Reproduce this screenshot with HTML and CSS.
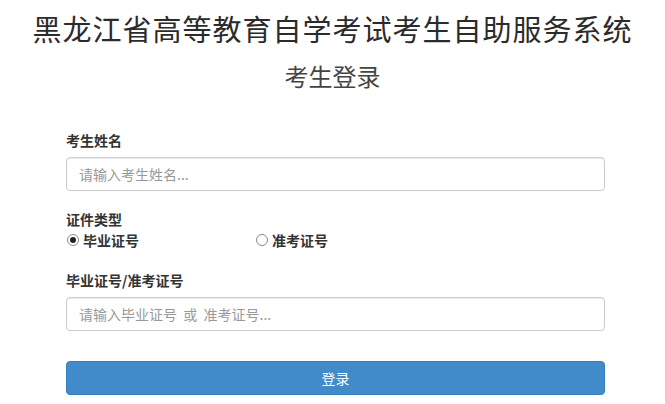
FILE: index.html
```html
<!DOCTYPE html>
<html lang="zh-CN">
<head>
    <meta charset="UTF-8">
    <meta name="viewport" content="width=device-width, initial-scale=1.0">
    <title>考生登录</title>
    <link rel="stylesheet" href="styles.css">
</head>
<body>

    <h1 class="titre">黑龙江省高等教育自学考试考生自助服务系统</h1>
    <h2 class="sous-titre">考生登录</h2>

    <form class="login-form">
        <div class="form-group">
            <label class="form-label" for="nomInput">考生姓名</label>
            <input type="text" id="nomInput" class="form-input" placeholder="请输入考生姓名...">
        </div>

        <div class="form-group group-radio">
            <span class="form-label">证件类型</span>
            <div class="radio-row">
                <label class="radio-option">
                    <input type="radio" name="typeCert" value="biye" checked>
                    毕业证号
                </label>
                <label class="radio-option">
                    <input type="radio" name="typeCert" value="zhunkao">
                    准考证号
                </label>
            </div>
        </div>

        <div class="form-group group-last">
            <label class="form-label" for="numInput">毕业证号/准考证号</label>
            <input type="text" id="numInput" class="form-input" placeholder="请输入毕业证号&#160;&#160;或&#160;&#160;准考证号...">
        </div>

        <button type="button" class="btn-login">登录</button>
    </form>

</body>
</html>
```

FILE: styles.css
```css
/* Styles de base */
body {
    font-family: "Noto Sans CJK SC", "Liberation Sans", sans-serif;
    background-color: #fff;
    color: #333;
    margin: 0;
    padding: 0;
}

.titre {
    font-size: 29px;
    line-height: 32px;
    font-weight: normal;
    letter-spacing: 1px;
    text-align: center;
    color: #2b2b2b;
    margin: 12px 0 0;
}

.sous-titre {
    font-size: 24px;
    line-height: 24px;
    font-weight: normal;
    text-align: center;
    color: #444;
    margin: 20px 0 0;
}

/* Formulaire */
.login-form {
    margin: 42px 60px 0 66px;
}

.form-group {
    margin-bottom: 18px;
}

.group-radio {
    margin-bottom: 20px;
}

.group-last {
    margin-bottom: 30px;
}

.form-label {
    display: block;
    font-size: 14px;
    line-height: 20px;
    font-weight: bold;
    color: #333;
    margin-bottom: 7px;
}

.form-input {
    display: block;
    width: 100%;
    height: 34px;
    box-sizing: border-box;
    padding: 6px 12px;
    font-family: inherit;
    font-size: 14px;
    color: #555;
    border: 1px solid #ccc;
    border-radius: 4px;
    box-shadow: inset 0 1px 1px rgba(0, 0, 0, 0.075);
}

.form-input::placeholder {
    color: #999;
}

/* Boutons radio */
.radio-row {
    display: flex;
    margin-top: -6px;
}

.radio-option {
    display: flex;
    align-items: center;
    gap: 4px;
    font-size: 14px;
    line-height: 20px;
    font-weight: bold;
    color: #333;
    width: 189px;
}

.radio-option input {
    appearance: none;
    width: 12px;
    height: 12px;
    margin: 0 0 0 1px;
    border: 1px solid #8a8a8a;
    border-radius: 50%;
    background-color: #fff;
    display: flex;
    align-items: center;
    justify-content: center;
}

.radio-option input:checked::after {
    content: "";
    width: 6px;
    height: 6px;
    border-radius: 50%;
    background-color: #222;
}

/* Bouton de connexion */
.btn-login {
    display: block;
    width: 100%;
    height: 34px;
    font-family: inherit;
    font-size: 14px;
    color: #fff;
    background-color: #428bca;
    border: 1px solid #357ebd;
    border-radius: 4px;
    cursor: pointer;
}

.btn-login:hover {
    background-color: #3071a9;
}
```
